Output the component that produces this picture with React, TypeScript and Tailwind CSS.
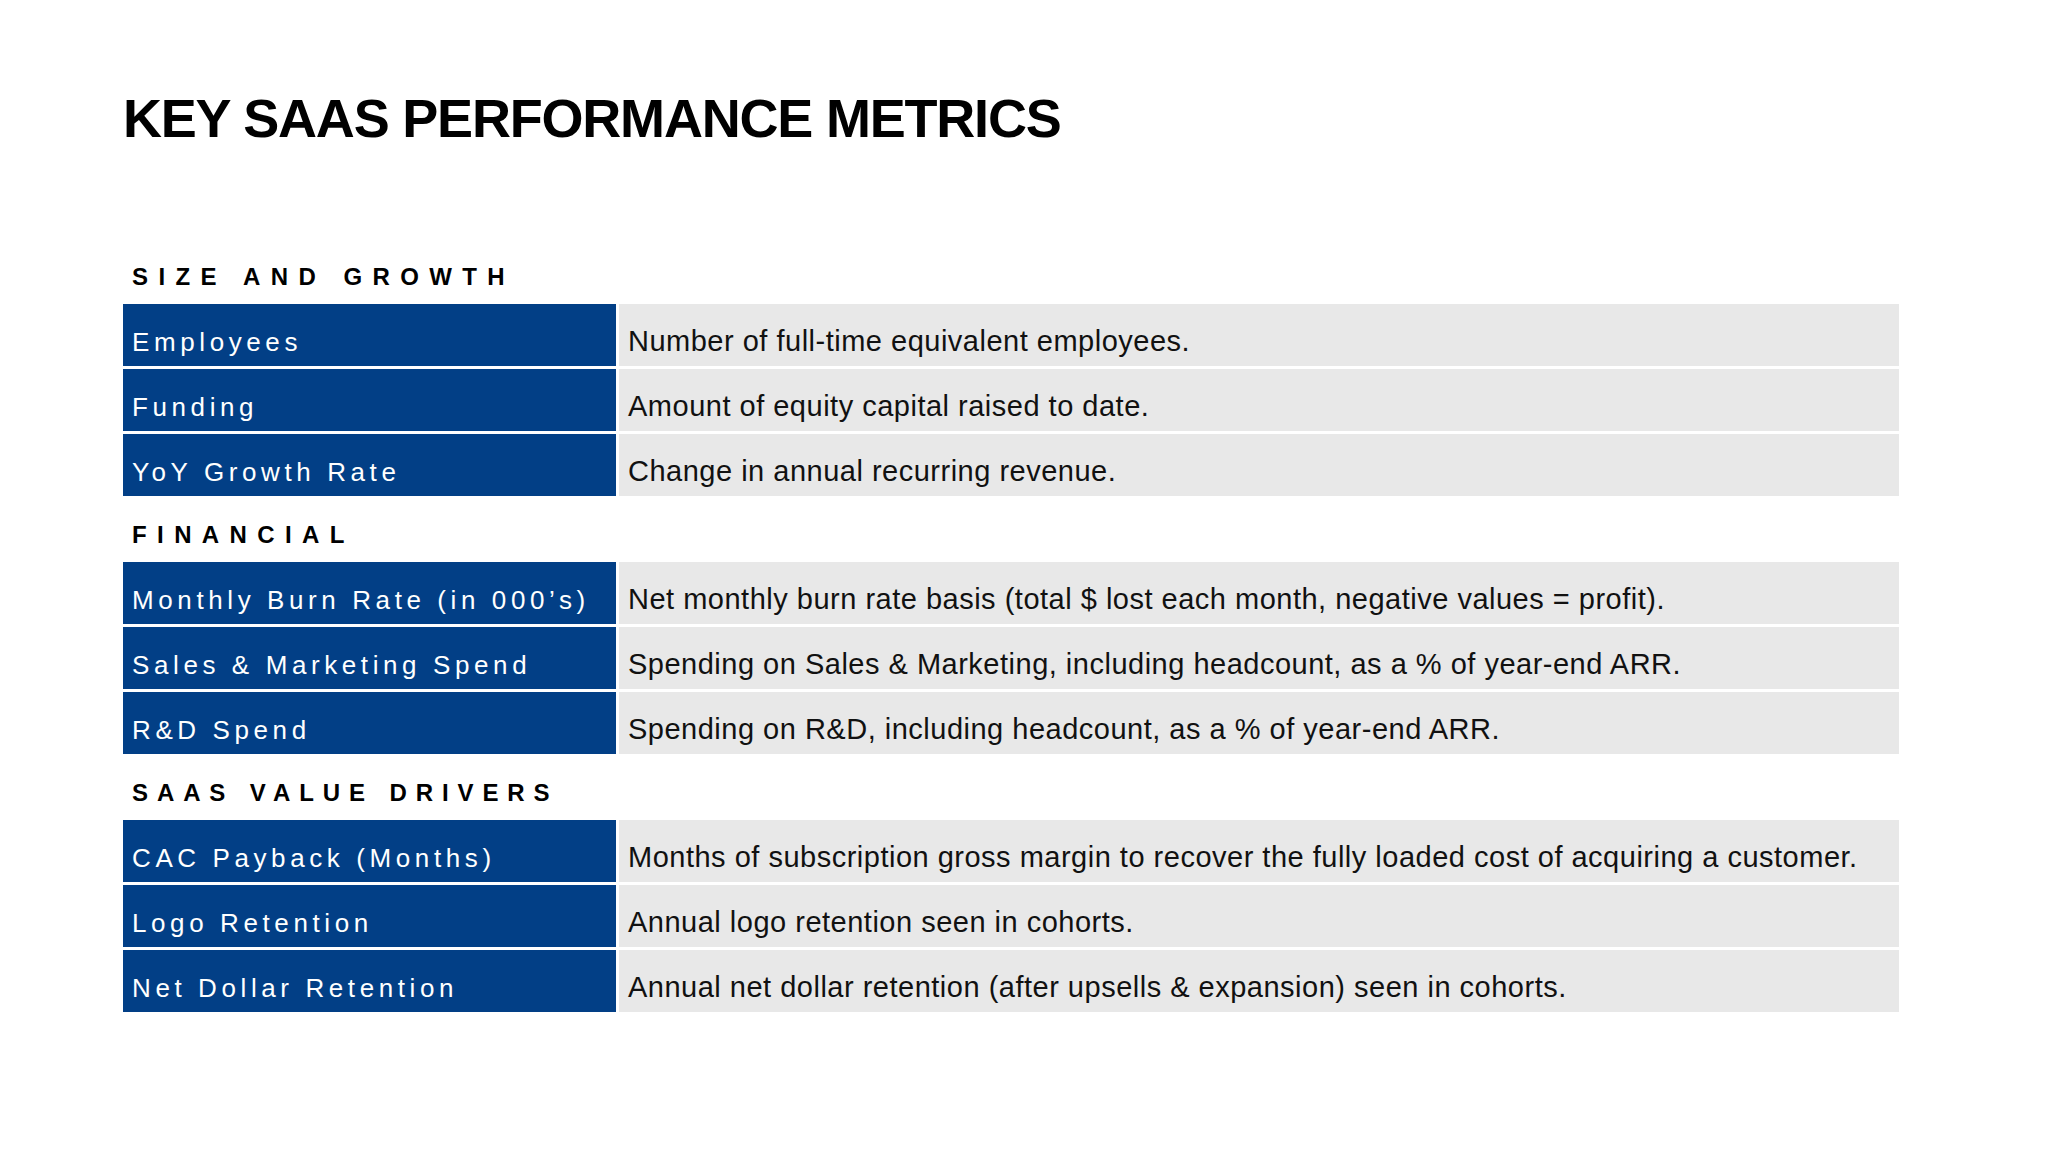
import React from 'react';

type Row = { label: string; desc: string };
type Section = { title: string; tracking: string; rows: Row[] };

const sections: Section[] = [
  {
    title: 'SIZE AND GROWTH',
    tracking: 'tracking-[10.4px]',
    rows: [
      { label: 'Employees', desc: 'Number of full-time equivalent employees.' },
      { label: 'Funding', desc: 'Amount of equity capital raised to date.' },
      { label: 'YoY Growth Rate', desc: 'Change in annual recurring revenue.' },
    ],
  },
  {
    title: 'FINANCIAL',
    tracking: 'tracking-[10.4px]',
    rows: [
      {
        label: 'Monthly Burn Rate (in 000\u2019s)',
        desc: 'Net monthly burn rate basis (total $ lost each month, negative values = profit).',
      },
      {
        label: 'Sales & Marketing Spend',
        desc: 'Spending on Sales & Marketing, including headcount, as a % of year-end ARR.',
      },
      { label: 'R&D Spend', desc: 'Spending on R&D, including headcount, as a % of year-end ARR.' },
    ],
  },
  {
    title: 'SAAS VALUE DRIVERS',
    tracking: 'tracking-[8.9px]',
    rows: [
      {
        label: 'CAC Payback (Months)',
        desc: 'Months of subscription gross margin to recover the fully loaded cost of acquiring a customer.',
      },
      { label: 'Logo Retention', desc: 'Annual logo retention seen in cohorts.' },
      {
        label: 'Net Dollar Retention',
        desc: 'Annual net dollar retention (after upsells & expansion) seen in cohorts.',
      },
    ],
  },
];

const MetricsSection: React.FC<{ section: Section; first?: boolean }> = ({ section, first }) => (
  <div className={first ? 'mt-[120px]' : 'mt-[27px]'}>
    <h2
      className={`pl-[9px] mb-[15px] text-[24px] leading-[24px] font-bold text-black ${section.tracking}`}
    >
      {section.title}
    </h2>
    <div className="flex flex-col gap-[3px]">
      {section.rows.map((row) => (
        <div key={row.label} className="flex h-[62px] gap-[3px]">
          <div className="w-[493px] shrink-0 bg-[#023f86] pl-[9px] pt-[25px] text-[26px] leading-[26px] tracking-[4.6px] text-white">
            {row.label}
          </div>
          <div className="flex-1 bg-[#e8e8e8] pl-[9px] pt-[23px] text-[29px] leading-[29px] tracking-[0.5px] text-[#111]">
            {row.desc}
          </div>
        </div>
      ))}
    </div>
  </div>
);

export default function App() {
  return (
    <div
      className="w-[2048px] h-[1152px] bg-white pl-[123px] pt-[91px] overflow-hidden"
      style={{ fontFamily: '"Liberation Sans", Arial, sans-serif' }}
    >
      <div className="w-[1776px]">
        <h1 className="text-[54px] leading-[54px] font-bold tracking-[-1.2px] text-black">
          KEY SAAS PERFORMANCE METRICS
        </h1>
        {sections.map((s, i) => (
          <MetricsSection key={s.title} section={s} first={i === 0} />
        ))}
      </div>
    </div>
  );
}
